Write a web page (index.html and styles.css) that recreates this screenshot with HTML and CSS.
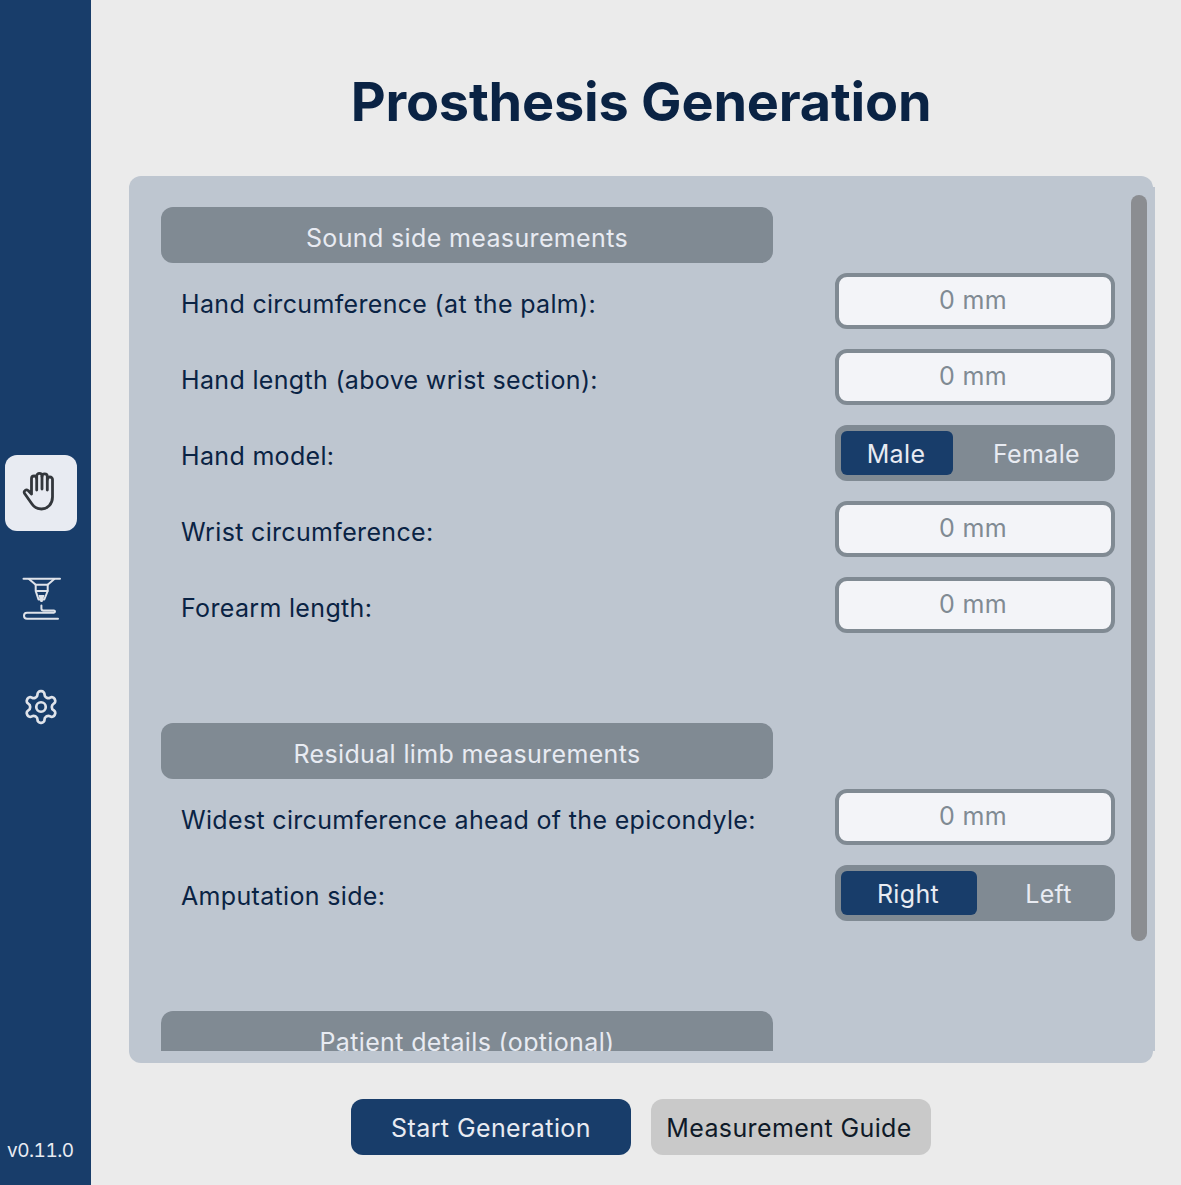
FILE: index.html
```html
<!DOCTYPE html>
<html lang="en">
<head>
<meta charset="utf-8">
<title>Prosthesis Generation</title>
<link rel="stylesheet" href="styles.css">
</head>
<body>
<div class="app">
  <aside class="sidebar">
    <nav class="nav">
      <button class="nav-btn active" aria-label="Hand">
        <svg class="icon-hand" width="40" height="44" viewBox="0 0 40 44" fill="none" stroke="#33373c" stroke-width="2.800" stroke-linecap="round" stroke-linejoin="round">
          <path d="M10.500 23V7.600a2.600 2.600 0 0 1 5.200 0V5a2.650 2.650 0 0 1 5.300 0v.6a2.650 2.650 0 0 1 5.300 0v3a2.600 2.600 0 0 1 5.200 0V26c0 7-5 12-11 12-5 0-7.500-2-9.500-5L3.600 22.500c-1.400-2.500 1.500-4.500 3.500-3l3.400 3.500"/>
          <path d="M15.700 7.600V19M21 5.600V18M26.300 8.600V19"/>
        </svg>
      </button>
      <button class="nav-btn" aria-label="Printer">
        <svg width="40" height="46" viewBox="0 0 40 46" fill="none" stroke="#dfe3ea" stroke-width="2" stroke-linecap="round" stroke-linejoin="round">
          <path d="M2.500 2.700H39"/>
          <path d="M8 3l6.700 5.700h12L33.300 3"/>
          <path d="M14.700 8.700V15l2.800 8.500h5.800l3.400-8.500V8.700"/>
          <path d="M15 15h11.500"/>
          <path class="nozzle" d="M17.500 19h6l-2 7h-2z"/>
          <path d="M20.400 29.500v3a2 2 0 0 0 2 2h10.500a1.100 1.100 0 0 1 0 2.200H6a3 3 0 0 0 0 6H37"/>
        </svg>
      </button>
      <button class="nav-btn nav-gear" aria-label="Settings">
        <svg width="38" height="38" viewBox="0 0 24 24" fill="none" stroke="#dfe3ea" stroke-width="1.700" stroke-linecap="round" stroke-linejoin="round">
          <path d="M12.220 2h-.440a2 2 0 0 0-2 2v.180a2 2 0 0 1-1 1.730l-.430.250a2 2 0 0 1-2 0l-.150-.080a2 2 0 0 0-2.730.730l-.220.380a2 2 0 0 0 .730 2.730l.150.100a2 2 0 0 1 1 1.720v.510a2 2 0 0 1-1 1.740l-.150.090a2 2 0 0 0-.730 2.730l.220.380a2 2 0 0 0 2.730.730l.150-.080a2 2 0 0 1 2 0l.430.250a2 2 0 0 1 1 1.730V20a2 2 0 0 0 2 2h.440a2 2 0 0 0 2-2v-.180a2 2 0 0 1 1-1.730l.430-.250a2 2 0 0 1 2 0l.150.080a2 2 0 0 0 2.730-.730l.220-.390a2 2 0 0 0-.730-2.730l-.150-.080a2 2 0 0 1-1-1.740v-.500a2 2 0 0 1 1-1.740l.150-.090a2 2 0 0 0 .730-2.730l-.220-.380a2 2 0 0 0-2.730-.730l-.150.080a2 2 0 0 1-2 0l-.430-.250a2 2 0 0 1-1-1.730V4a2 2 0 0 0-2-2z"/>
          <circle cx="12" cy="12" r="3"/>
        </svg>
      </button>
    </nav>
    <div class="version">v0.11.0</div>
  </aside>
  <main class="main">
    <h1 class="title">Prosthesis Generation</h1>
    <section class="panel">
      <div class="scroller">
        <div class="group">
          <h2 class="group-head">Sound side measurements</h2>
          <div class="row"><span class="label">Hand circumference (at the palm):</span><div class="input">0 mm</div></div>
          <div class="row"><span class="label">Hand length (above wrist section):</span><div class="input">0 mm</div></div>
          <div class="row"><span class="label">Hand model:</span>
            <div class="toggle"><span class="opt on opt-male">Male</span><span class="opt off">Female</span></div>
          </div>
          <div class="row"><span class="label">Wrist circumference:</span><div class="input">0 mm</div></div>
          <div class="row"><span class="label">Forearm length:</span><div class="input">0 mm</div></div>
        </div>
        <div class="group">
          <h2 class="group-head">Residual limb measurements</h2>
          <div class="row"><span class="label">Widest circumference ahead of the epicondyle:</span><div class="input">0 mm</div></div>
          <div class="row"><span class="label">Amputation side:</span>
            <div class="toggle"><span class="opt on opt-right">Right</span><span class="opt off">Left</span></div>
          </div>
        </div>
        <div class="group">
          <h2 class="group-head">Patient details (optional)</h2>
        </div>
      </div>
      <div class="thumb"></div>
    </section>
    <div class="actions">
      <button class="btn primary">Start Generation</button>
      <button class="btn secondary">Measurement Guide</button>
    </div>
  </main>
</div>
</body>
</html>
```

FILE: styles.css
```css
* { box-sizing: border-box; }
html, body { margin: 0; height: 100%; }
body {
  background: #ebebeb;
  font-family: Inter, "Liberation Sans", sans-serif;
  overflow: hidden;
}
.app { display: flex; height: 1185px; }

.sidebar {
  width: 91px;
  flex: none;
  background: #183d6a;
  display: flex;
  flex-direction: column;
  padding-top: 455px;
}
.nav { display: flex; flex-direction: column; gap: 30px; padding-left: 5px; }
.nav-btn {
  width: 72px;
  height: 76px;
  border: 0;
  padding: 0;
  background: transparent;
  border-radius: 12px;
  display: flex;
  align-items: center;
  justify-content: center;
}
.nav-btn.active { background: #e8ebf2; }
.nav-gear { margin-top: 2px; }
.nozzle { fill: #dfe3ea; stroke: none; }
.version {
  margin-top: auto;
  padding: 0 0 22px 7px;
  font-size: 19px;
  line-height: 24px;
  letter-spacing: -0.5px;
  font-variant-numeric: tabular-nums;
  color: #e8ebf2;
}

.main {
  flex: 1;
  min-width: 0;
  padding: 0 28px 0 38px;
  display: flex;
  flex-direction: column;
}
.title {
  margin: 0;
  height: 176px;
  padding-top: 69px;
  text-align: center;
  font-size: 54px;
  line-height: 66px;
  font-weight: 700;
  letter-spacing: -0.2px;
  color: #0a2344;
}
.panel {
  position: relative;
  height: 887px;
  background: #bec6d0;
  border-radius: 12px;
  padding-top: 11px;
  padding-bottom: 12px;
}
.scroller {
  height: 864px;
  width: 1026px;
  background: #bec6d0;
  overflow: hidden;
  padding: 20px 40px 0 32px;
}
.thumb {
  position: absolute;
  left: 1002px;
  top: 19px;
  width: 16px;
  height: 746px;
  background: #8b8d91;
  border-radius: 8px;
}
.group { display: flex; flex-direction: column; gap: 20px; margin-bottom: 90px; }
.group-head {
  margin: 0 0 -10px;
  width: 612px;
  height: 56px;
  background: #808a93;
  border-radius: 12px;
  color: #e8ebf2;
  font-size: 25px;
  line-height: 62px;
  font-weight: 400;
  letter-spacing: 0.36px;
  text-align: center;
  flex: none;
}
.row {
  display: flex;
  justify-content: space-between;
  align-items: center;
  width: 954px;
  height: 56px;
}
.label {
  padding: 6px 0 0 20px;
  font-size: 25px;
  line-height: 30px;
  letter-spacing: 0.33px;
  color: #0a2344;
}
.input {
  width: 280px;
  height: 56px;
  border: 4px solid #808a93;
  border-radius: 12px;
  background: #f3f4f8;
  color: #808a93;
  font-size: 25px;
  line-height: 47px;
  letter-spacing: 0.3px;
  text-align: center;
  padding-right: 4px;
}
.toggle {
  width: 280px;
  height: 56px;
  padding: 6px;
  background: #808a93;
  border-radius: 12px;
  display: flex;
  color: #e8ebf2;
  font-size: 25px;
  line-height: 44px;
  letter-spacing: 0.35px;
}
.opt { flex: 1; text-align: center; padding-top: 1px; }
.opt.on { background: #183d6a; border-radius: 6px; }
.opt.off { margin-left: 11px; }
.opt-male { flex: none; width: 112px; padding-right: 2px; }
.opt-right { flex: none; width: 136px; padding-right: 2px; }

.actions {
  display: flex;
  justify-content: center;
  gap: 20px;
  margin-top: 36px;
}
.btn {
  width: 280px;
  height: 56px;
  border: 0;
  border-radius: 12px;
  font-family: inherit;
  font-size: 25px;
  line-height: 58px;
  letter-spacing: 0.4px;
  padding: 0;
}
.primary { background: #183d6a; color: #e8ebf2; }
.secondary { background: #c9c9c9; color: #0f1a28; padding-right: 4px; }
```
